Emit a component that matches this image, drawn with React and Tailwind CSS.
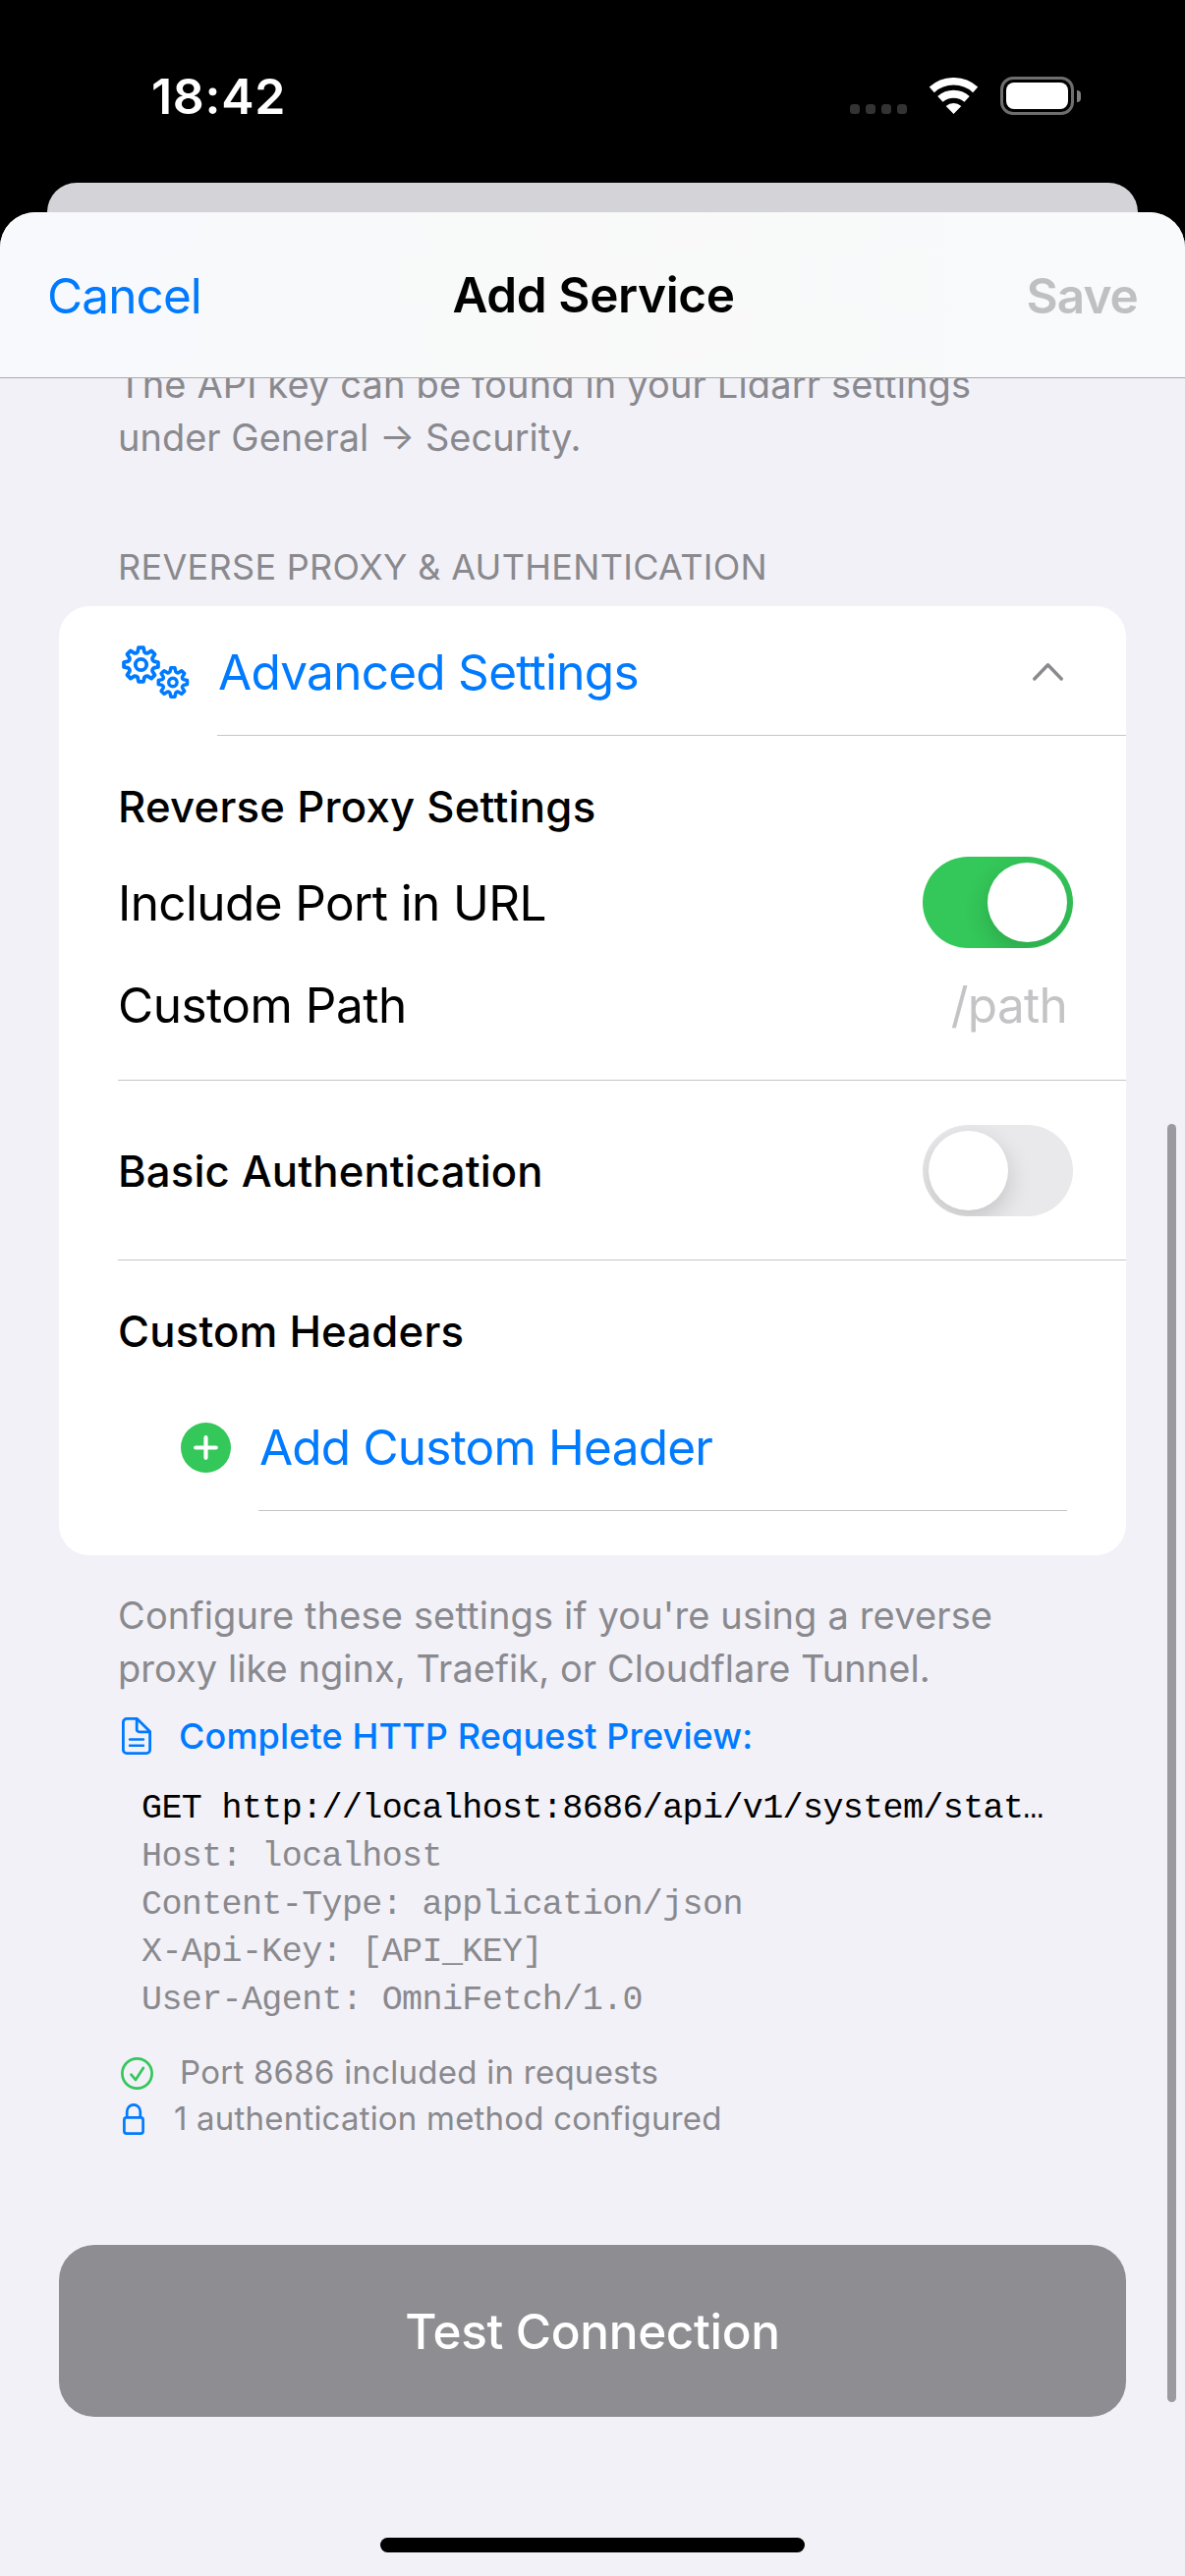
import React from "react";

// Outline of an eight-toothed gear centred on (cx, cy).
function gearPath(cx, cy, outer, inner) {
  const p = (r, deg) => {
    const a = ((deg - 90) * Math.PI) / 180;
    return `${(cx + r * Math.cos(a)).toFixed(2)} ${(cy + r * Math.sin(a)).toFixed(2)}`;
  };
  let d = `M${p(inner, -15)}`;
  for (let i = 0; i < 8; i++) {
    const a = i * 45;
    d += `L${p(outer, a - 8)}L${p(outer, a + 8)}L${p(inner, a + 15)}Q${p(inner - 1.2, a + 22.5)} ${p(inner, a + 30)}`;
  }
  return d + "Z";
}

function GearsIcon() {
  return (
    <svg className="h-[54px] w-[69px] shrink-0" viewBox="0 0 69 54" fill="none" stroke="#007aff" strokeLinejoin="round">
      <path d={gearPath(19.5, 19.5, 17.6, 13.4)} strokeWidth="3.8" />
      <circle cx="19.5" cy="19.5" r="5.7" strokeWidth="3.8" />
      <path d={gearPath(51.9, 37.5, 14.8, 11.2)} strokeWidth="3.5" />
      <circle cx="51.9" cy="37.5" r="4.2" strokeWidth="3.4" />
    </svg>
  );
}

function WifiIcon() {
  return (
    <svg className="ml-[22px] h-[37px] w-[51px]" viewBox="0 0 51 37" fill="none" stroke="#fff">
      <path d="M3.3 12.3A33.2 33.2 0 0 1 47.7 12.3" strokeWidth="7.6" />
      <path d="M11.9 21.9A20.3 20.3 0 0 1 39.1 21.9" strokeWidth="8" />
      <path d="M25.5 37L17.7 28.9A11.7 11.7 0 0 1 33.3 28.9Z" fill="#fff" stroke="none" />
    </svg>
  );
}

function Battery() {
  return (
    <div className="ml-[22px] flex items-center gap-[3px]">
      <div className="h-[39px] w-[75px] rounded-[13px] border-[3px] border-[#6e6e6e] p-[3px]">
        <div className="h-full w-full rounded-[8px] bg-white" />
      </div>
      <div className="h-[12px] w-[4px] rounded-r-full bg-[#808080]" />
    </div>
  );
}

function StatusBar() {
  return (
    <div className="flex h-[186px] items-start justify-between pt-[68px] pr-[106px] pl-[154px] text-white">
      <div className="text-[50px] leading-[60px] font-semibold tracking-[0.7px]">18:42</div>
      <div className="flex h-[59px] items-center">
        <div className="flex gap-[6px] self-end pb-[11px]">
          {[0, 1, 2, 3].map((i) => (
            <div key={i} className="h-[10px] w-[10px] rounded-[3.5px] bg-[#333333]" />
          ))}
        </div>
        <WifiIcon />
        <Battery />
      </div>
    </div>
  );
}

function NavBar() {
  return (
    <div className="relative z-10 grid h-[169px] shrink-0 grid-cols-3 items-start border-b border-[#aaaaad] bg-linear-to-r from-[#f8f9fd] via-[#f8f9f8] to-[#f9fafc] px-[48px] pt-[54px] text-[49.5px] leading-[60px]">
      <div className="pt-px tracking-[-0.9px] text-[#007aff]">Cancel</div>
      <div className="pl-[2px] text-center font-semibold tracking-[-0.4px]">Add Service</div>
      <div className="pt-px text-right font-semibold tracking-[-0.9px] text-[#bfc0c2]">Save</div>
    </div>
  );
}

function Toggle({ on }) {
  return (
    <div
      className={
        on
          ? "flex h-[93px] w-[153px] justify-end overflow-hidden rounded-full bg-[#34c759] p-[6px]"
          : "flex h-[93px] w-[153px] justify-start overflow-hidden rounded-full bg-[#e9e9eb] p-[6px]"
      }
    >
      <div className="h-[81px] w-[81px] rounded-full bg-white shadow-[0_9px_24px_rgba(0,0,0,0.17)]" />
    </div>
  );
}

function Card() {
  return (
    <div className="mx-[60px] mt-[18px] rounded-[31px] bg-white text-black">
      <div className="flex h-[131px] items-center pt-[3px] pr-[64px] pl-[64px]">
        <GearsIcon />
        <div className="ml-[29px] text-[49.5px] leading-[60px] tracking-[-0.73px] text-[#007aff]">Advanced Settings</div>
        <svg className="ml-auto h-[18px] w-[31px]" viewBox="0 0 31 18" fill="none" stroke="#8a8a8e" strokeWidth="3.4" strokeLinecap="round" strokeLinejoin="round">
          <path d="M1.8 16L15.5 1.8L29.2 16" />
        </svg>
      </div>
      <div className="ml-[161px] h-px bg-[#c6c6c8]" />

      <div className="pt-[45px] pr-[54px] pb-[46px] pl-[60px]">
        <div className="text-[43.7px] leading-[56px] font-medium tracking-[0.24px]">Reverse Proxy Settings</div>
        <div className="mt-[22px] flex items-center justify-between">
          <div className="text-[49.5px] leading-[60px] tracking-[-0.62px]">Include Port in URL</div>
          <Toggle on />
        </div>
        <div className="mt-[28px] flex items-center justify-between text-[49.5px] leading-[60px]">
          <div className="tracking-[-0.48px]">Custom Path</div>
          <div className="pr-[6px] tracking-[-0.73px] text-[#c4c4c6]">/path</div>
        </div>
      </div>
      <div className="ml-[60px] h-px bg-[#c6c6c8]" />

      <div className="flex items-center justify-between pt-[45px] pr-[54px] pb-[44px] pl-[60px]">
        <div className="pt-[2px] text-[43.7px] leading-[56px] font-medium tracking-[0.13px]">Basic Authentication</div>
        <Toggle />
      </div>
      <div className="ml-[60px] h-px bg-[#c6c6c8]" />

      <div className="pt-[45px] pr-[60px] pb-[45px] pl-[60px]">
        <div className="text-[43.7px] leading-[56px] font-medium tracking-[0.18px]">Custom Headers</div>
        <div className="mt-[63px] flex h-[52px] items-center pl-[64px]">
          <svg className="h-[51px] w-[51px]" viewBox="0 0 51 51" fill="none">
            <circle cx="25.5" cy="25.5" r="25.5" fill="#34c759" />
            <path d="M25.5 15.2V35.8M15.2 25.5H35.8" stroke="#fff" strokeWidth="4.2" strokeLinecap="round" />
          </svg>
          <div className="ml-[29px] text-[49.5px] leading-[52px] tracking-[-0.8px] text-[#007aff]">Add Custom Header</div>
        </div>
        <div className="mt-[38px] ml-[143px] h-px bg-[#c6c6c8]" />
      </div>
    </div>
  );
}

const headers = ["Host: localhost", "Content-Type: application/json", "X-Api-Key: [API_KEY]", "User-Agent: OmniFetch/1.0"];

function RequestPreview() {
  return (
    <div className="px-[120px] text-[#89898e]">
      <div className="mt-[20px] flex h-[44px] items-center pl-[4px]">
        <svg className="h-[38px] w-[30px]" viewBox="0 0 30 38" fill="none" stroke="#007aff" strokeWidth="2.8" strokeLinejoin="round" strokeLinecap="round">
          <path d="M5 1.4H15.5L28.6 14.6V33A3.6 3.6 0 0 1 25 36.6H5A3.6 3.6 0 0 1 1.4 33V5A3.6 3.6 0 0 1 5 1.4Z" />
          <path d="M15.2 1.8V12.4A2.4 2.4 0 0 0 17.6 14.8H28.2" />
          <path d="M8 22.5H22M8 28.8H22" strokeWidth="2.4" />
        </svg>
        <div className="ml-[28px] text-[36px] leading-[44px] font-medium tracking-[0.15px] text-[#007aff]">Complete HTTP Request Preview:</div>
      </div>
      <div className="mt-[28px] ml-[24px] font-['Liberation_Mono',monospace] text-[35px] leading-[48.8px] tracking-[-0.61px] whitespace-pre">
        <div className="text-black">GET http://localhost:8686/api/v1/system/stat…</div>
        {headers.map((h) => (
          <div key={h}>{h}</div>
        ))}
      </div>
      <div className="mt-[26px] text-[33px] leading-[44px]">
        <div className="flex h-[47px] items-center pl-[3px]">
          <svg className="h-[33px] w-[33px]" viewBox="0 0 33 33" fill="none" stroke="#34c759" strokeWidth="2.7" strokeLinecap="round" strokeLinejoin="round">
            <circle cx="16.5" cy="16.5" r="15.1" />
            <path d="M10.5 17.6L15 23L22.8 11" />
          </svg>
          <div className="-mt-[3px] ml-[27px] tracking-[0.25px]">Port 8686 included in requests</div>
        </div>
        <div className="flex h-[47px] items-center pl-[5px]">
          <svg className="h-[32px] w-[22px]" viewBox="0 0 22 32" fill="none" stroke="#007aff" strokeWidth="2.7">
            <rect x="1.4" y="14.4" width="19.2" height="16.2" rx="2.4" />
            <path d="M4.2 14.4V8.6A6.8 7.3 0 0 1 17.8 8.6V14.4" />
          </svg>
          <div className="-mt-[3px] ml-[30px] tracking-[0.2px]">1 authentication method configured</div>
        </div>
      </div>
    </div>
  );
}

export default function App() {
  return (
    <div className="relative flex h-[2622px] w-[1206px] flex-col overflow-hidden bg-black font-['Inter',sans-serif] text-black">
      <StatusBar />
      <div className="mx-[48px] h-[30px] shrink-0 rounded-t-[30px] bg-[#d4d3d8]" />
      <div className="flex flex-1 flex-col overflow-hidden rounded-t-[36px] bg-[#f2f1f7]">
        <NavBar />
        <div className="-mt-[21px] px-[120px] text-[38px] leading-[54px] text-[#89898e]">
          <div className="tracking-[0.14px]">The API key can be found in your Lidarr settings</div>
          <div>under General → Security.</div>
        </div>
        <div className="mt-[83px] px-[120px] text-[36px] leading-[44px] tracking-[0.31px] text-[#89898e]">REVERSE PROXY &amp; AUTHENTICATION</div>
        <Card />
        <div className="mt-[34px] px-[120px] text-[38px] leading-[54px] text-[#89898e]">
          <div className="tracking-[0.15px]">Configure these settings if you're using a reverse</div>
          <div className="tracking-[0.05px]">proxy like nginx, Traefik, or Cloudflare Tunnel.</div>
        </div>
        <RequestPreview />
        <div className="mx-[60px] mt-[104px] flex h-[175px] shrink-0 items-center justify-center rounded-[36px] bg-[#8e8d92] pt-px text-[49.5px] leading-[60px] font-medium tracking-[-0.35px] text-white">
          Test Connection
        </div>
        <div className="mx-auto mt-[123px] h-[15px] w-[432px] shrink-0 rounded-full bg-black" />
      </div>
      <div className="absolute top-[1144px] right-[9px] h-[1301px] w-[9px] rounded-full bg-[#9b9a9f]" />
    </div>
  );
}
